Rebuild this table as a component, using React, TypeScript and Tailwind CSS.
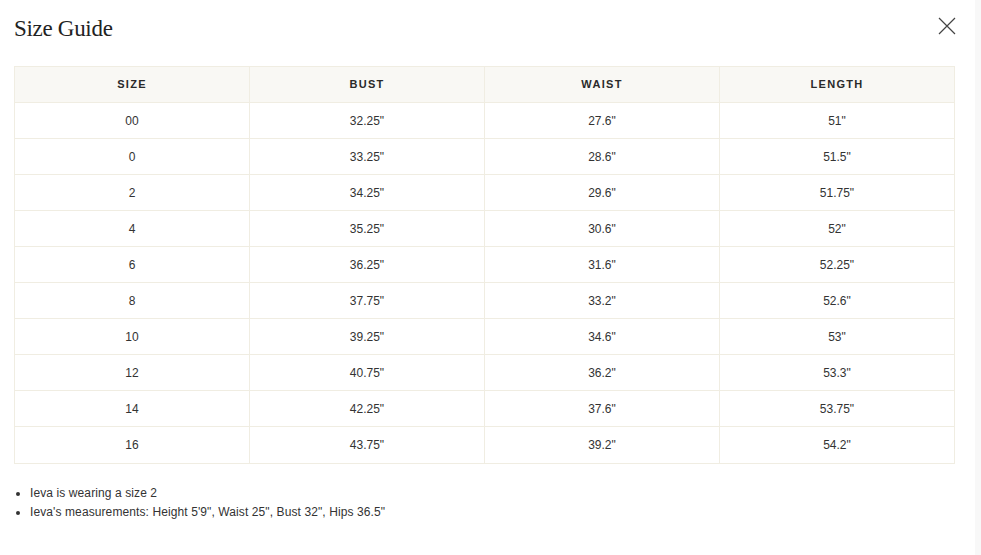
import React from 'react';

const rows = [
  ['00', '32.25"', '27.6"', '51"'],
  ['0', '33.25"', '28.6"', '51.5"'],
  ['2', '34.25"', '29.6"', '51.75"'],
  ['4', '35.25"', '30.6"', '52"'],
  ['6', '36.25"', '31.6"', '52.25"'],
  ['8', '37.75"', '33.2"', '52.6"'],
  ['10', '39.25"', '34.6"', '53"'],
  ['12', '40.75"', '36.2"', '53.3"'],
  ['14', '42.25"', '37.6"', '53.75"'],
  ['16', '43.75"', '39.2"', '54.2"'],
];

const heads = ['SIZE', 'BUST', 'WAIST', 'LENGTH'];

export default function App() {
  return (
    <div className="flex h-[555px] w-[981px] overflow-hidden bg-white text-[#333]" style={{ fontFamily: '"Liberation Sans", Arial, sans-serif' }}>
      <div className="w-[975px] pl-[14px] pr-[20px]">
        {/* header */}
        <div className="flex h-[66px] items-start justify-between">
          <h1 className="mt-[15px] text-[23px] leading-[27px] text-[#222] tracking-[-0.3px]" style={{ fontFamily: '"Liberation Serif", "Times New Roman", serif' }}>
            Size Guide
          </h1>
          <button className="mt-[17px] mr-[-1px] text-[#444]">
            <svg width="18" height="18" viewBox="0 0 18 18" fill="none" stroke="currentColor" strokeWidth="1.2">
              <path d="M1 1L17 17M17 1L1 17" />
            </svg>
          </button>
        </div>

        {/* table */}
        <table className="w-[941px] table-fixed border-collapse text-[12px]">
          <thead>
            <tr className="h-[36px] bg-[#f9f8f4]">
              {heads.map((h) => (
                <th key={h} className="border border-[#f0ede2] font-bold text-[11px] tracking-[1.3px] text-[#2a2a2a]">
                  {h}
                </th>
              ))}
            </tr>
          </thead>
          <tbody>
            {rows.map((r, ri) => (
              <tr key={r[0]} className={ri === rows.length - 1 ? 'h-[37px]' : 'h-[36px]'}>
                {r.map((c, i) => (
                  <td key={i} className="border border-[#f0ede2] text-center text-[#333]">
                    {c}
                  </td>
                ))}
              </tr>
            ))}
          </tbody>
        </table>

        {/* notes */}
        <ul className="mt-[20px] list-disc pl-[16px] text-[12px] leading-[19px] tracking-[0.1px] text-[#333]">
          <li>Ieva is wearing a size 2</li>
          <li>Ieva's measurements: Height 5'9", Waist 25", Bust 32", Hips 36.5"</li>
        </ul>
      </div>
      <div className="flex-1 bg-[#f8f8f8]" />
    </div>
  );
}
